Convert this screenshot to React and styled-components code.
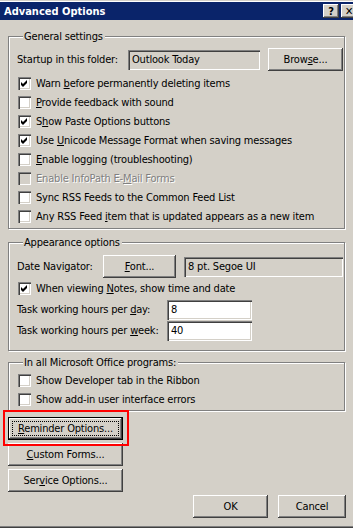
import React from "react";
import styled, { createGlobalStyle, css } from "styled-components";

const Global = createGlobalStyle`
  html, body { margin: 0; padding: 0; background: #d4d0c8; }
  body { font-family: "DejaVu Sans Condensed", "Liberation Sans", sans-serif; font-size: 11px; color: #000; letter-spacing: -0.18px; }
  * { box-sizing: border-box; }
`;

const Window = styled.div`
  width: 353px;
  height: 528px;
  overflow: hidden;
  background: #d4d0c8;
  border-top: 1px solid #d4d0c8;
  box-shadow: inset 0 1px 0 #fff;
  border-bottom: 1px solid #404040;
  display: flex;
  flex-direction: column;
`;

const TitleBar = styled.div`
  height: 18px;
  margin: 1px -4px 0 0;
  background: #0a246a;
  color: #fff;
  display: flex;
  align-items: center;
  padding: 0 0 0 4px;
  flex-shrink: 0;
`;

const TitleText = styled.span`
  flex: 1;
  font-weight: bold;
  letter-spacing: 0;
`;

const CaptionButton = styled.span`
  width: 16px;
  height: 14px;
  margin-left: 2px;
  background: #d4d0c8;
  color: #000;
  box-shadow: inset -1px -1px #404040, inset 1px 1px #fff, inset -2px -2px #808080;
  display: flex;
  align-items: center;
  justify-content: center;
  font-weight: bold;
  font-size: 11px;
  flex-shrink: 0;
`;

const Body = styled.div`
  flex: 1;
  padding: 10px 8px 0 8px;
  display: flex;
  flex-direction: column;
  border-bottom: 1px solid #808080;
`;

const Group = styled.fieldset`
  margin: ${p => p.$mt || 0}px 0 0 0;
  padding: ${p => p.$pad};
  border: 1px solid #808080;
  box-shadow: inset 1px 1px 0 #fff, 1px 1px 0 #fff;
  min-width: 0;
`;

const Legend = styled.legend`
  padding: 0 2px 0 1px;
  margin-left: 6px;
  line-height: 13px;
  background: #d4d0c8;
`;

const Row = styled.div`
  display: flex;
  align-items: center;
  height: ${p => p.$h || 19}px;
  margin-top: ${p => p.$mt || 0}px;
`;

const Label = styled.span`
  width: ${p => (p.$w ? p.$w + "px" : "auto")};
  flex-shrink: 0;
  white-space: nowrap;
`;

const sunken = css`
  box-shadow: inset 1px 1px #808080, inset 2px 2px #404040, inset -1px -1px #fff, inset -2px -2px #d4d0c8;
`;

const TextBox = styled.div`
  width: ${p => p.$w}px;
  height: ${p => p.$h || 20}px;
  margin-left: ${p => p.$ml || 0}px;
  background: ${p => (p.$readOnly ? "#d4d0c8" : "#fff")};
  ${sunken};
  display: flex;
  align-items: center;
  padding-left: 4px;
  white-space: nowrap;
  flex-shrink: 0;
`;

const Button = styled.div`
  width: ${p => p.$w || 75}px;
  height: 23px;
  margin-left: ${p => p.$ml || 0}px;
  display: flex;
  align-items: center;
  justify-content: center;
  background: #d4d0c8;
  box-shadow: inset -1px -1px #404040, inset 1px 1px #fff, inset -2px -2px #808080;
  position: relative;
  white-space: nowrap;
  flex-shrink: 0;
  ${p =>
    p.$default &&
    css`
      border: 1px solid #000;
      &::after {
        content: "";
        position: absolute;
        inset: 3px;
        border: 1px dotted #000;
      }
    `}
`;

const Highlight = styled.div`
  position: relative;
  align-self: flex-start;
  &::before {
    content: "";
    position: absolute;
    top: -7px;
    left: -5px;
    right: -6px;
    bottom: -6px;
    border: 2px solid #ff0000;
    pointer-events: none;
    z-index: 2;
  }
`;

const CheckRow = styled.label`
  display: flex;
  align-items: center;
  height: 19px;
  margin-top: ${p => p.$mt || 0}px;
  padding-left: 1px;
  color: ${p => (p.$disabled ? "#808080" : "#000")};
  text-shadow: ${p => (p.$disabled ? "1px 1px 0 #fff" : "none")};
  white-space: nowrap;
`;

const Box = styled.span`
  width: 13px;
  height: 13px;
  margin-right: 5px;
  background: ${p => (p.$disabled ? "#d4d0c8" : "#fff")};
  ${sunken};
  display: inline-flex;
  align-items: center;
  justify-content: center;
  flex-shrink: 0;
`;

const U = styled.span`
  text-decoration: underline;
  text-underline-offset: 1px;
`;

const ButtonColumn = styled.div`
  display: flex;
  flex-direction: column;
  gap: 3px;
  margin-top: 6px;
`;

const Footer = styled.div`
  display: flex;
  justify-content: flex-end;
  gap: 10px;
  margin-top: 3px;
  margin-right: -1px;
`;

const Check = () => (
  <svg width="7" height="7" viewBox="0 0 7 7">
    <path d="M0 2 L2 4 L6 0 L6 3 L2 7 L0 5 Z" fill="#000" />
  </svg>
);

const CheckItem = ({ checked, disabled, mt, children }) => (
  <CheckRow $disabled={disabled} $mt={mt}>
    <Box $disabled={disabled}>{checked && <Check />}</Box>
    <span>{children}</span>
  </CheckRow>
);

export default function App() {
  return (
    <>
      <Global />
      <Window>
        <TitleBar>
          <TitleText>Advanced Options</TitleText>
          <CaptionButton>?</CaptionButton>
          <CaptionButton>✕</CaptionButton>
        </TitleBar>
        <Body>
          <Group $pad="5px 1px 2px 8px">
            <Legend>General settings</Legend>
            <Row $h={23}>
              <Label $w={111}>Startup in this folder:</Label>
              <TextBox $w={132} $readOnly>Outlook Today</TextBox>
              <Button $ml={8}>
                <span>Brow<U>s</U>e...</span>
              </Button>
            </Row>
            <CheckItem checked mt={3}>Warn <U>b</U>efore permanently deleting items</CheckItem>
            <CheckItem><U>P</U>rovide feedback with sound</CheckItem>
            <CheckItem checked>S<U>h</U>ow Paste Options buttons</CheckItem>
            <CheckItem checked>Use <U>U</U>nicode Message Format when saving messages</CheckItem>
            <CheckItem><U>E</U>nable logging (troubleshooting)</CheckItem>
            <CheckItem disabled>Enable InfoPath E-<U>M</U>ail Forms</CheckItem>
            <CheckItem>Sync RSS Feeds to the Common Feed List</CheckItem>
            <CheckItem>Any RSS Feed <U>i</U>tem that is updated appears as a new item</CheckItem>
          </Group>
          <Group $mt={7} $pad="6px 1px 9px 8px">
            <Legend>Appearance options</Legend>
            <Row $h={23}>
              <Label $w={86}>Date Navigator:</Label>
              <Button $w={73}><span><U>F</U>ont...</span></Button>
              <TextBox $w={159} $ml={8} $readOnly>8 pt. Segoe UI</TextBox>
            </Row>
            <CheckItem checked mt={1}>When viewing <U>N</U>otes, show time and date</CheckItem>
            <Row $h={21} $mt={1}>
              <Label $w={150}>Task working hours per <U>d</U>ay:</Label>
              <TextBox $w={85}>8</TextBox>
            </Row>
            <Row $h={21}>
              <Label $w={150}>Task working hours per <U>w</U>eek:</Label>
              <TextBox $w={85}>40</TextBox>
            </Row>
          </Group>
          <Group $mt={5} $pad="2px 1px 1px 8px">
            <Legend>In all Microsoft Office programs:</Legend>
            <CheckItem>Show Developer tab in the Ribbon</CheckItem>
            <CheckItem>Show add-in user interface errors</CheckItem>
          </Group>
          <ButtonColumn>
            <Highlight>
              <Button $w={115} $default><span><U>R</U>eminder Options...</span></Button>
            </Highlight>
            <Button $w={115}><span><U>C</U>ustom Forms...</span></Button>
            <Button $w={115}><span>Ser<U>v</U>ice Options...</span></Button>
          </ButtonColumn>
          <Footer>
            <Button>OK</Button>
            <Button $w={68}>Cancel</Button>
          </Footer>
        </Body>
      </Window>
    </>
  );
}
